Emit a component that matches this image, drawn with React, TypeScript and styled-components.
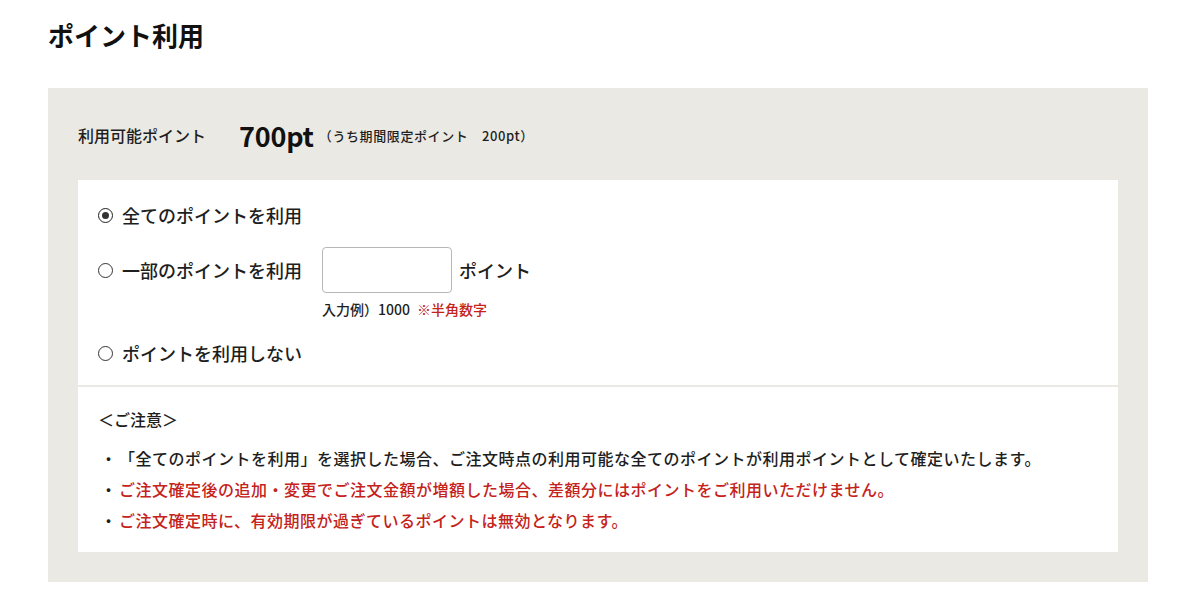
import React, { useState } from "react";
import styled, { createGlobalStyle } from "styled-components";

const GlobalStyle = createGlobalStyle`
  html, body { margin: 0; padding: 0; background: #fff; }
  body {
    font-family: "Noto Sans CJK JP", "Noto Sans", sans-serif;
    color: #1e1e1e;
  }
  * { box-sizing: border-box; }
`;

const Page = styled.div`
  width: 1200px;
  padding: 18px 52px 0 48px;
`;

const Title = styled.h1`
  margin: 0;
  font-size: 26px;
  line-height: 34px;
  font-weight: 700;
  color: #111;
`;

const Panel = styled.section`
  margin-top: 36px;
  width: 1100px;
  background: #ebe9e4;
  padding: 30px;
`;

const InfoRow = styled.div`
  display: flex;
  align-items: center;
  height: 34px;
  margin-bottom: 28px;
`;

const InfoLabel = styled.span`
  font-size: 16px;
  font-weight: 500;
  width: 161px;
  color: #1e1e1e;
`;

const Amount = styled.span`
  font-size: 27px;
  font-weight: 700;
  color: #111;
  letter-spacing: -0.2px;
`;

const SubAmount = styled.span`
  font-size: 13px;
  font-weight: 500;
  letter-spacing: 0.6px;
  margin-left: 5px;
  color: #1e1e1e;
`;

const Box = styled.div`
  background: #fff;
`;

const Options = styled.div`
  padding: 20px 20px 17px;
  display: flex;
  flex-direction: column;
`;

const OptionRow = styled.div<{ $mt?: number }>`
  display: flex;
  align-items: flex-start;
  margin-top: ${(p) => p.$mt ?? 0}px;
`;

const RadioLabel = styled.label<{ $h?: number }>`
  display: flex;
  align-items: center;
  height: ${(p) => p.$h ?? 30}px;
  font-size: 18px;
  font-weight: 500;
  color: #1e1e1e;
  cursor: pointer;
  width: 224px;
`;

const Radio = styled.input.attrs({ type: "radio" })`
  appearance: none;
  margin: 0 9px 0 0;
  width: 15px;
  height: 15px;
  border: 1px solid #333;
  border-radius: 50%;
  display: grid;
  place-items: center;
  flex-shrink: 0;
  &:checked {
    border-width: 1.5px;
    border-color: #222;
  }
  &:checked::after {
    content: "";
    width: 7px;
    height: 7px;
    border-radius: 50%;
    background: #333;
  }
`;

const InputColumn = styled.div`
  display: flex;
  flex-direction: column;
`;

const InputLine = styled.div`
  display: flex;
  align-items: center;
  gap: 7px;
`;

const PointInput = styled.input`
  width: 130px;
  height: 46px;
  border: 1px solid #b7b7b7;
  border-radius: 4px;
  padding: 0 8px;
  font-size: 16px;
  font-family: inherit;
  outline: none;
`;

const Unit = styled.span`
  font-size: 18px;
  font-weight: 500;
  color: #1e1e1e;
`;

const Hint = styled.div`
  margin-top: 7px;
  font-size: 14px;
  font-weight: 500;
  line-height: 18px;
  color: #1e1e1e;
`;

const Red = styled.span<{ $ml?: number }>`
  color: #c4221a;
  margin-left: ${(p) => p.$ml ?? 0}px;
`;

const Divider = styled.hr`
  margin: 0;
  border: none;
  height: 2px;
  background: #ebe9e4;
`;

const Notes = styled.div`
  padding: 20px 20px 16px;
`;

const NoteHead = styled.div`
  font-size: 16px;
  font-weight: 500;
  line-height: 24px;
  margin-bottom: 12px;
  color: #1e1e1e;
`;

const NoteList = styled.ul`
  margin: 0;
  padding: 0;
  list-style: none;
`;

const NoteItem = styled.li<{ $red?: boolean }>`
  display: flex;
  font-size: 16px;
  font-weight: 500;
  line-height: 31px;
  letter-spacing: 0.5px;
  color: ${(p) => (p.$red ? "#c4221a" : "#1e1e1e")};
`;

const Bullet = styled.span`
  width: 21px;
  flex-shrink: 0;
  text-align: center;
  color: #1e1e1e;
  letter-spacing: 0;
`;

export default function App() {
  const [mode, setMode] = useState<"all" | "part" | "none">("all");
  return (
    <>
      <GlobalStyle />
      <Page>
        <Title>ポイント利用</Title>
        <Panel>
          <InfoRow>
            <InfoLabel>利用可能ポイント</InfoLabel>
            <Amount>700pt</Amount>
            <SubAmount>（うち期間限定ポイント　200pt）</SubAmount>
          </InfoRow>
          <Box>
            <Options>
              <OptionRow>
                <RadioLabel>
                  <Radio
                    name="point"
                    checked={mode === "all"}
                    onChange={() => setMode("all")}
                  />
                  全てのポイントを利用
                </RadioLabel>
              </OptionRow>
              <OptionRow $mt={17}>
                <RadioLabel $h={46}>
                  <Radio
                    name="point"
                    checked={mode === "part"}
                    onChange={() => setMode("part")}
                  />
                  一部のポイントを利用
                </RadioLabel>
                <InputColumn>
                  <InputLine>
                    <PointInput aria-label="利用ポイント" />
                    <Unit>ポイント</Unit>
                  </InputLine>
                  <Hint>
                    入力例）1000<Red $ml={7}>※半角数字</Red>
                  </Hint>
                </InputColumn>
              </OptionRow>
              <OptionRow $mt={20}>
                <RadioLabel>
                  <Radio
                    name="point"
                    checked={mode === "none"}
                    onChange={() => setMode("none")}
                  />
                  ポイントを利用しない
                </RadioLabel>
              </OptionRow>
            </Options>
            <Divider />
            <Notes>
              <NoteHead>＜ご注意＞</NoteHead>
              <NoteList>
                <NoteItem>
                  <Bullet>・</Bullet>
                  「全てのポイントを利用」を選択した場合、ご注文時点の利用可能な全てのポイントが利用ポイントとして確定いたします。
                </NoteItem>
                <NoteItem $red>
                  <Bullet>・</Bullet>
                  ご注文確定後の追加・変更でご注文金額が増額した場合、差額分にはポイントをご利用いただけません。
                </NoteItem>
                <NoteItem $red>
                  <Bullet>・</Bullet>
                  ご注文確定時に、有効期限が過ぎているポイントは無効となります。
                </NoteItem>
              </NoteList>
            </Notes>
          </Box>
        </Panel>
      </Page>
    </>
  );
}
